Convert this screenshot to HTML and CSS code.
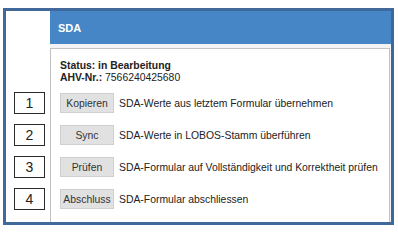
FILE: index.html
```html
<!DOCTYPE html>
<html lang="de">
<head>
<meta charset="utf-8">
<title>SDA</title>
<link rel="stylesheet" href="styles.css">
</head>
<body>
<div class="frame">
  <div class="gutter">
    <div class="num">1</div>
    <div class="num">2</div>
    <div class="num">3</div>
    <div class="num">4</div>
  </div>
  <div class="panel">
    <div class="panel-head">SDA</div>
    <div class="panel-body">
      <div class="status">Status: in Bearbeitung</div>
      <div class="ahv"><b>AHV-Nr.:</b> 7566240425680</div>
      <div class="actions">
        <div class="row"><button class="btn">Kopieren</button><span class="desc">SDA-Werte aus letztem Formular übernehmen</span></div>
        <div class="row"><button class="btn">Sync</button><span class="desc">SDA-Werte in LOBOS-Stamm überführen</span></div>
        <div class="row"><button class="btn">Prüfen</button><span class="desc">SDA-Formular auf Vollständigkeit und Korrektheit prüfen</span></div>
        <div class="row"><button class="btn">Abschluss</button><span class="desc">SDA-Formular abschliessen</span></div>
      </div>
    </div>
  </div>
</div>
</body>
</html>
```
FILE: styles.css
```css
html, body {
  margin: 0;
  padding: 0;
  background: #ffffff;
}
body {
  width: 398px;
  height: 228px;
  overflow: hidden;
  font-family: "Liberation Sans", Arial, sans-serif;
  color: #222222;
}
.frame {
  box-sizing: border-box;
  margin: 8px 0 0 3px;
  width: 391px;
  height: 217px;
  border: 3px solid #41689a;
  display: flex;
}
.gutter {
  width: 44px;
  flex: none;
  box-sizing: border-box;
  padding: 81px 0 0 8px;
  display: flex;
  flex-direction: column;
  gap: 10px;
  background: #ffffff;
}
.num {
  box-sizing: border-box;
  width: 31px;
  height: 22px;
  border: 1px solid #2b2b2b;
  display: flex;
  align-items: center;
  justify-content: center;
  font-size: 14px;
  color: #222222;
}
.panel {
  flex: 1;
  display: flex;
  flex-direction: column;
  background: #f3f3f3;
}
.panel-head {
  height: 33px;
  flex: none;
  background: #4685c6;
  color: #ffffff;
  font-weight: bold;
  font-size: 11px;
  display: flex;
  align-items: center;
  padding-left: 8px;
}
.panel-body {
  flex: 1;
  margin-top: 4px;
  margin-right: 1px;
  background: #ffffff;
  border: 1px solid #c2c2c2;
  border-bottom: none;
  padding: 11px 0 0 9px;
  font-size: 10.4px;
}
.status {
  font-weight: bold;
  line-height: 12px;
}
.ahv {
  line-height: 12px;
}
.actions {
  margin-top: 3px;
  display: flex;
  flex-direction: column;
}
.row {
  height: 32px;
  display: flex;
  align-items: center;
  gap: 5px;
}
.btn {
  box-sizing: border-box;
  width: 54px;
  height: 20px;
  padding: 0;
  background: #e1e1e1;
  border: 1px solid #cfcfcf;
  border-radius: 0;
  font-family: "Liberation Sans", Arial, sans-serif;
  font-size: 10.4px;
  color: #333333;
}
.desc {
  white-space: nowrap;
}
```
